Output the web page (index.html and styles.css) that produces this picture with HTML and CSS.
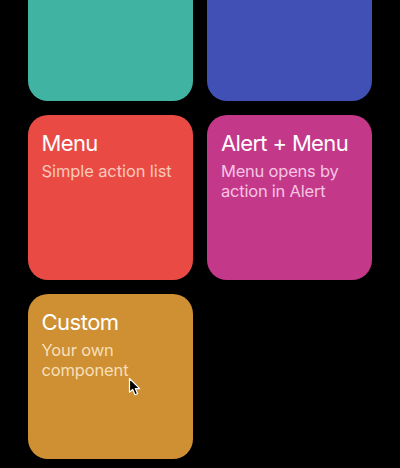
FILE: index.html
```html
<!DOCTYPE html>
<html lang="en">
<head>
<meta charset="utf-8">
<title>Components</title>
<link rel="stylesheet" href="styles.css">
</head>
<body>
<main class="grid">
  <section class="card teal"></section>
  <section class="card blue"></section>
  <section class="card red"><h2>Menu</h2><p>Simple action list</p></section>
  <section class="card pink"><h2>Alert + Menu</h2><p>Menu opens by<br>action in Alert</p></section>
  <section class="card amber"><h2>Custom</h2><p>Your own<br>component</p></section>
</main>
<svg class="cursor" width="14" height="20" viewBox="0 0 14 20"><path d="M1.5 1.5V15.2L4.7 12.5L7 17.8L9.6 16.7L7.3 11.6H11.7Z" fill="#000" stroke="#fff" stroke-width="1.2" stroke-linejoin="round"/></svg>
</body>
</html>
```

FILE: styles.css
```css
* { box-sizing: border-box; }
body {
  margin: 0;
  height: 468px;
  overflow: hidden;
  position: relative;
  background: #000;
  color: #fff;
  font-family: Inter, "Liberation Sans", sans-serif;
}
.grid {
  display: grid;
  grid-template-columns: 165px 165px;
  grid-template-rows: 101px 165px 165px;
  gap: 14px;
  padding-left: 28px;
}
.card { border-radius: 20px; padding: 15px 13.5px; }
.teal, .blue { border-radius: 0 0 20px 20px; }
.teal { background: #40b3a2; }
.blue { background: #4050b5; }
.red { background: #e94b44; }
.pink { background: #c4388a; padding-left: 14px; }
.amber { background: #ce9032; }
h2 {
  margin: 0;
  font-size: 22px;
  line-height: 26px;
  font-weight: 400;
  letter-spacing: -0.65px;
  white-space: nowrap;
}
.amber h2 { letter-spacing: -0.5px; }
p {
  margin: 5px 0 0;
  font-size: 16.5px;
  font-weight: 400;
  line-height: 20px;
  letter-spacing: -0.1px;
  white-space: nowrap;
}
.red p { color: #fac8bc; }
.pink p { color: #f6c4e2; letter-spacing: -0.22px; }
.amber p { color: #f8dfb8; letter-spacing: -0.15px; }
.cursor { position: absolute; left: 128px; top: 377px; }
```
